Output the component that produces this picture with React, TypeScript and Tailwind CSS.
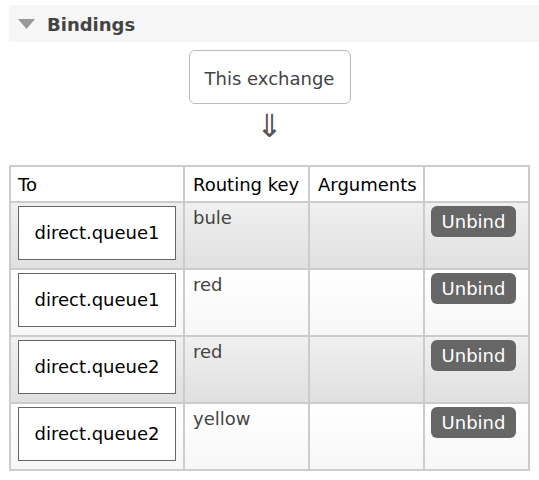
import React from "react";

const rows = [
  { q: "direct.queue1", key: "bule", alt: true },
  { q: "direct.queue1", key: "red", alt: false },
  { q: "direct.queue2", key: "red", alt: true },
  { q: "direct.queue2", key: "yellow", alt: false },
];

export default function App() {
  return (
    <div className="w-[539px] h-[480px] bg-white pt-[5px] pl-[9px] text-[18px] text-[#444]" style={{ fontFamily: '"DejaVu Sans", Verdana, sans-serif' }}>
      <div className="h-[37px] bg-[#f6f6f6] flex items-center pl-[9px]">
        <svg width="17" height="10" viewBox="0 0 17 10" className="mr-[12px] mt-[1px]">
          <polygon points="0,0 17,0 8.5,10" fill="#999" />
        </svg>
        <span className="text-[18px] font-bold text-[#444] leading-none pt-[3px]">Bindings</span>
      </div>
      <div className="w-[521px] flex flex-col items-center">
        <div className="mt-[8px] w-[162px] h-[54px] border border-[#bbb] rounded-[6px] flex items-center justify-center text-[#444] leading-[22px] pt-[3px]">
          This exchange
        </div>
        <div className="h-[61px] flex items-start justify-center pt-[3px] text-[32px] leading-[38px] text-[#555]">⇓</div>
      </div>
      <div className="w-[521px] grid grid-cols-[172px_123px_113px_103px] gap-[2px] p-[2px] bg-[#cccccc] leading-[22px]">
        <div className="bg-white h-[34px] pl-[7px] flex items-center pt-[2px] text-black">To</div>
        <div className="bg-white h-[34px] pl-[8px] flex items-center pt-[2px] text-black">Routing key</div>
        <div className="bg-white h-[34px] pl-[8px] flex items-center pt-[2px] text-black">Arguments</div>
        <div className="bg-white h-[34px]"></div>
        {rows.map((r, i) => {
          const bg = r.alt
            ? "bg-gradient-to-b from-[#f0f0f0] to-[#e0e0e0]"
            : "bg-gradient-to-b from-[#ffffff] to-[#f7f7f7]";
          return (
            <React.Fragment key={i}>
              <div className={`${bg} h-[65px] pl-[7px] pt-[3px]`}>
                <div className="w-[158px] h-[54px] bg-white border border-[#666] flex items-center justify-center text-black">
                  {r.q}
                </div>
              </div>
              <div className={`${bg} h-[65px] pl-[8px] pt-[4px] text-[#444]`}>{r.key}</div>
              <div className={`${bg} h-[65px]`}></div>
              <div className={`${bg} h-[65px] pl-[6px] pt-[3px]`}>
                <div className="w-[85px] h-[31px] bg-[#666] rounded-[6px] flex items-center justify-center text-white">
                  Unbind
                </div>
              </div>
            </React.Fragment>
          );
        })}
      </div>
    </div>
  );
}
